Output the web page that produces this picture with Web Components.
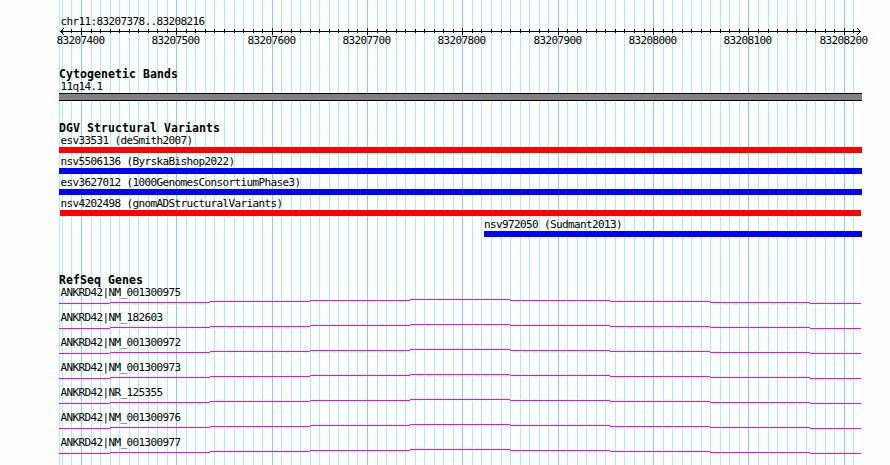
<!DOCTYPE html>
<html lang="en">
<head>
<meta charset="utf-8">
<title>chr11:83207378..83208216</title>
<style>
    body{
        margin: 0;
        background: #fdfffc;
        color: #000;
        font: 11px/13px "DejaVu Sans Mono", "Liberation Mono", monospace;
        letter-spacing: -0.62px;
    }
</style>
</head>
<body>
<genome-view>
    <genome-ruler>chr11:83207378..83208216</genome-ruler>
    <genome-track name="Cytogenetic Bands" style="margin-top: 20px">
        <genome-feature label="11q14.1" kind="band"></genome-feature>
    </genome-track>
    <genome-track name="DGV Structural Variants" style="margin-top: 21px">
        <genome-feature label="esv33531 (deSmith2007)" kind="loss"></genome-feature>
        <genome-feature label="nsv5506136 (ByrskaBishop2022)" kind="gain"></genome-feature>
        <genome-feature label="esv3627012 (1000GenomesConsortiumPhase3)" kind="gain"></genome-feature>
        <genome-feature label="nsv4202498 (gnomADStructuralVariants)" kind="loss" inset></genome-feature>
        <genome-feature label="nsv972050 (Sudmant2013)" kind="gain" style="margin-left: 425px"></genome-feature>
    </genome-track>
    <genome-track name="RefSeq Genes" style="margin-top: 35px">
        <genome-feature label="ANKRD42|NM_001300975" kind="gene"></genome-feature>
        <genome-feature label="ANKRD42|NM_182603" kind="gene"></genome-feature>
        <genome-feature label="ANKRD42|NM_001300972" kind="gene"></genome-feature>
        <genome-feature label="ANKRD42|NM_001300973" kind="gene"></genome-feature>
        <genome-feature label="ANKRD42|NR_125355" kind="gene"></genome-feature>
        <genome-feature label="ANKRD42|NM_001300976" kind="gene"></genome-feature>
        <genome-feature label="ANKRD42|NM_001300977" kind="gene"></genome-feature>
    </genome-track>
</genome-view>
<script>
const START = 83207378;
const END = 83208216;
// offset from the left edge of the panel, which is 59px into the page
const toX = (position) => Math.round(60 + (position - START) * 800 / 839) - 59;
const ticks = [];
for(let position = 83207380; position <= END; position += 10){
    ticks.push({position, x: toX(position), major: position % 100 === 0});
}

class GenomeView extends HTMLElement{
    constructor(){
        super();
        this.attachShadow({mode: 'open'});
    }
    connectedCallback(){
        const lines = ticks.map(({x, major}) => `<rect x="${x}" width="1" height="465" fill="${major ? '#87ceeb' : '#afeeee'}"/>`).join('');
        this.shadowRoot.innerHTML = `
            <style>
                :host{
                    display: block;
                    position: relative;
                    box-sizing: border-box;
                    width: 890px;
                    height: 465px;
                    padding: 14px 28px 0 59px;
                    overflow: hidden;
                }
                .grid{
                    position: absolute;
                    top: 0;
                    left: 59px;
                }
                .tracks{
                    position: relative;
                }
            </style>
            <svg class="grid" width="803" height="465" shape-rendering="crispEdges">
                <rect x="0" width="1" height="465" fill="#afeeee"/>${lines}
            </svg>
            <div class="tracks"><slot></slot></div>
        `;
    }
}
customElements.define('genome-view', GenomeView);

class GenomeRuler extends HTMLElement{
    constructor(){
        super();
        this.attachShadow({mode: 'open'});
    }
    connectedCallback(){
        const marks = ticks.map(({x, major}) => major
            ? `<rect x="${x}" y="0" width="1" height="7"/>`
            : `<rect x="${x}" y="1" width="1" height="4"/>`).join('');
        const numbers = ticks.filter(({major}) => major)
            .map(({x, position}) => `<text x="${x - 24.5}" y="16">${position}</text>`).join('');
        this.shadowRoot.innerHTML = `
            <style>
                :host{
                    display: block;
                    height: 34px;
                }
                .range{
                    height: 14px;
                    padding-left: 1.5px;
                    line-height: 15px;
                }
                svg{
                    display: block;
                    overflow: visible;
                }
            </style>
            <div class="range"><slot></slot></div>
            <svg width="803" height="20">
                <g shape-rendering="crispEdges">
                    <rect x="1" y="3" width="801" height="1"/>
                    ${marks}
                    <path d="M2 2h1v1h-1zM3 1h1v1h-1zM4 0h1v1h-1zM2 4h1v1h-1zM3 5h1v1h-1zM4 6h1v1h-1zM800 2h1v1h-1zM799 1h1v1h-1zM798 0h1v1h-1zM800 4h1v1h-1zM799 5h1v1h-1zM798 6h1v1h-1z"/>
                </g>
                ${numbers}
            </svg>
        `;
    }
}
customElements.define('genome-ruler', GenomeRuler);

class GenomeTrack extends HTMLElement{
    constructor(){
        super();
        this.attachShadow({mode: 'open'});
    }
    connectedCallback(){
        this.shadowRoot.innerHTML = `
            <style>
                :host{
                    display: block;
                }
                h2{
                    margin: 0;
                    height: 12px;
                    font-size: 11.5px;
                    line-height: 13px;
                    letter-spacing: 0.08px;
                }
            </style>
            <h2>${this.getAttribute('name')}</h2>
            <slot></slot>
        `;
    }
}
customElements.define('genome-track', GenomeTrack);

class GenomeFeature extends HTMLElement{
    constructor(){
        super();
        this.attachShadow({mode: 'open'});
    }
    connectedCallback(){
        this.shadowRoot.innerHTML = `
            <style>
                :host{
                    display: block;
                    width: 803px;
                    height: 21px;
                }
                :host([kind="gene"]){
                    height: 25px;
                }
                :host([style]){
                    width: 378px;
                }
                :host([style]) .label{
                    padding-left: 0;
                }
                .label{
                    height: 13px;
                    padding-left: 1.5px;
                    line-height: 13px;
                    white-space: pre;
                }
                .bar{
                    height: 6px;
                }
                .loss{
                    background: #f00;
                }
                .gain{
                    background: #00f;
                }
                .band{
                    background: #838083;
                    border: solid #000;
                    border-width: 1px 0;
                }
                :host([inset]) .bar{
                    margin: 0 1px;
                }
                svg{
                    display: block;
                }
            </style>
            <div class="label">${this.getAttribute('label')}</div>
            ${this.shape()}
        `;
    }
    shape(){
        const kind = this.getAttribute('kind');
        if(kind !== 'gene') return `<div class="bar ${kind}"></div>`;
        // the intron climbs one pixel per step up to the middle and back down
        const steps = [4, 3, 2, 1, 0, 1, 2, 3, 4].map((level, i) => {
            const left = i === 0 ? 0 : i * 100 - 49;
            const right = i === 8 ? 802 : i * 100 + 51;
            return `<rect x="${left}" y="${level}" width="${right - left}" height="1"/>`;
        }).join('');
        return `<svg width="803" height="6" fill="#f0f" shape-rendering="crispEdges">${steps}</svg>`;
    }
}
customElements.define('genome-feature', GenomeFeature);
</script>
</body>
</html>
